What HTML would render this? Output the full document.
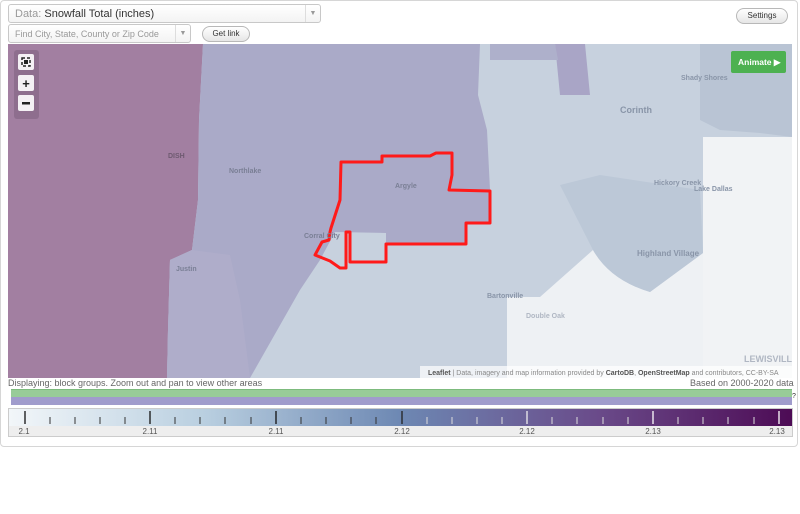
<!DOCTYPE html>
<html><head><meta charset="utf-8"><style>
body{margin:0;width:800px;height:514px;background:#fff;font-family:"Liberation Sans",Arial,sans-serif;position:relative;overflow:hidden}
.wrap{position:absolute;left:0;top:0;width:796px;height:445px;border:1px solid #d6d6d6;border-radius:4px}
.sel{position:absolute;border:1px solid #c8c8c8;border-radius:3px;background:linear-gradient(#fff,#f3f3f3);font-size:11px;color:#999;box-sizing:border-box}
.arr{position:absolute;right:0;top:0;bottom:0;width:14px;border-left:1px solid #ddd;color:#999;font-size:7px;text-align:center}
.btn{position:absolute;border:1px solid #b8b8b8;border-radius:9px;background:linear-gradient(#fff,#e6e6e6);font-size:8px;color:#333;text-align:center;box-sizing:border-box}
.abs{position:absolute}
</style></head><body>
<div class="wrap"></div>
<div class="sel" style="left:8px;top:4px;width:313px;height:19px;padding:3px 6px"><span>Data:</span> <span style="color:#333">Snowfall Total (inches)</span><div class="arr" style="line-height:17px">▼</div></div>
<div class="sel" style="left:8px;top:24px;width:183px;height:19px;padding:4px 6px;font-size:9px;color:#999">Find City, State, County or Zip Code<div class="arr" style="line-height:17px">▼</div></div>
<div class="btn" style="left:202px;top:26px;width:48px;height:16px;line-height:14px">Get link</div>
<div class="btn" style="left:736px;top:8px;width:52px;height:16px;line-height:14px">Settings</div>
<svg class="abs" style="left:8px;top:44px" width="784" height="334" viewBox="8 44 784 334">
<rect x="8" y="44" width="784" height="334" fill="#c7d1de"/>
<path d="M593,250 Q610,280 650,292 L703,253 L703,378 L507,378 L507,297 L540,297 Z" fill="#eef1f4"/>
<polygon points="703,137 792,137 792,378 703,378" fill="#f1f3f5"/>
<path d="M560,185 L600,175 L700,190 L703,253 L650,292 Q610,280 593,250 Z" fill="#bcc8d7"/>
<polygon points="700,44 792,44 792,137 760,133 720,130 700,120" fill="#b9c4d4"/>
<polygon points="8,44 203,44 199,120 198,200 192,250 170,260 168,330 167,378 8,378" fill="#a27fa1"/>
<polygon points="203,44 480,44 478,95 487,130 490,190 490,223 466,224 466,245 386,245 386,233 335,232 320,260 300,290 250,378 167,378 168,330 170,260 192,250 198,200 199,120" fill="#aaaac8"/>
<polygon points="168,330 170,260 192,250 230,255 240,300 250,378 167,378" fill="#afadca"/>
<polygon points="555,44 585,44 590,95 560,95" fill="#a9a5c6"/>
<polygon points="490,44 555,44 558,60 490,60" fill="#aeb0cb"/>
<polygon fill="none" stroke="#ff1a1a" stroke-width="3" stroke-linejoin="round" points="341,162 382,162 382,156 430,156 436,153 452,153 452,175 449,190 490,191 490,223 466,223 466,244 386,244 386,262 350,262 350,232 346,232 346,268 340,268 330,261 315,255 322,242 329,240 330,232 331,228 340,200"/>
<line x1="350" y1="232" x2="350" y2="262" stroke="#ff1a1a" stroke-width="2"/>
<g font-size="7" fill="#7a7f95" font-weight="bold">
<text x="168" y="158" fill="#6e5a70">DISH</text><text x="229" y="173">Northlake</text><text x="395" y="188">Argyle</text><text x="304" y="238">Corral City</text><text x="176" y="271">Justin</text>
<text x="620" y="113" fill="#8995a8" font-size="9">Corinth</text><text x="681" y="80" fill="#8995a8">Shady Shores</text><text x="654" y="185" fill="#8995a8">Hickory Creek</text><text x="694" y="191" fill="#8995a8">Lake Dallas</text><text x="637" y="256" fill="#8995a8" font-size="8">Highland Village</text><text x="487" y="298" fill="#8995a8">Bartonville</text><text x="526" y="318" fill="#b0b7c3">Double Oak</text><text x="744" y="362" fill="#b0b7c3" font-size="9">LEWISVILL</text>
</g>
<rect x="14" y="50" width="25" height="69" rx="3" fill="#8a6a8a" opacity="0.8"/>
<rect x="18" y="54" width="16" height="16" rx="2" fill="#f4f0f4"/><rect x="22" y="58" width="8" height="8" fill="none" stroke="#222" stroke-width="1.5" stroke-dasharray="3 2"/><rect x="24" y="60" width="4" height="4" fill="#222"/>
<rect x="18" y="75" width="16" height="16" rx="2" fill="#f4f0f4"/><text x="26" y="88" font-size="13" font-weight="bold" text-anchor="middle" fill="#222">+</text>
<rect x="18" y="95" width="16" height="16" rx="2" fill="#f4f0f4"/><rect x="22" y="102" width="8" height="2.5" fill="#222"/>
<rect x="731" y="51" width="55" height="22" rx="2" fill="#4db151"/><text x="738" y="65" font-size="8.5" fill="#fff" font-weight="bold">Animate ▶</text>
<rect x="420" y="366" width="372" height="12" fill="#fff" opacity="0.7"/>
<text x="428" y="375" font-size="7" fill="#888"><tspan fill="#555" font-weight="bold">Leaflet</tspan> | Data, imagery and map information provided by <tspan fill="#555" font-weight="bold">CartoDB</tspan>, <tspan fill="#555" font-weight="bold">OpenStreetMap</tspan> and contributors, CC-BY-SA</text>
</svg>
<div class="abs" style="left:8px;top:378px;font-size:9px;color:#666">Displaying: block groups. Zoom out and pan to view other areas</div>
<div class="abs" style="left:690px;top:378px;font-size:9px;color:#666">Based on 2000-2020 data</div>
<div class="abs" style="left:11px;top:389px;width:781px;height:8px;background:#98cc98;border-top:1px solid #7dbb7d"></div>
<div class="abs" style="left:11px;top:397px;width:781px;height:8px;background:#a09ccc"></div>
<div class="abs" style="left:792px;top:393px;font-size:7px;color:#333">?</div>
<div class="abs" style="left:8px;top:408px;width:785px;height:29px;border:1px solid #ccc;background:#eee;box-sizing:border-box"></div>
<svg class="abs" style="left:9px;top:409px" width="783" height="27">
<defs><linearGradient id="g" x1="0" x2="1"><stop offset="0" stop-color="#f2f6f9"/><stop offset="0.25" stop-color="#b9cfe0"/><stop offset="0.5" stop-color="#6d88b3"/><stop offset="0.75" stop-color="#6a4b8a"/><stop offset="1" stop-color="#4d0b55"/></linearGradient></defs>
<rect x="0" y="0" width="783" height="17" fill="url(#g)"/>
<g stroke-width="1.3">
<line x1="16" y1="2" x2="16" y2="15" stroke="#111"/><line x1="141" y1="2" x2="141" y2="15" stroke="#111"/><line x1="267" y1="2" x2="267" y2="15" stroke="#111"/><line x1="393" y1="2" x2="393" y2="15" stroke="#222"/><line x1="518" y1="2" x2="518" y2="15" stroke="#eee"/><line x1="644" y1="2" x2="644" y2="15" stroke="#fff"/><line x1="770" y1="2" x2="770" y2="15" stroke="#fff"/>
</g>
<g stroke-width="1" stroke="#333">
<path d="M41 8v7M66 8v7M91 8v7M116 8v7M166 8v7M191 8v7M216 8v7M242 8v7M292 8v7M317 8v7M342 8v7M367 8v7"/>
</g>
<g stroke-width="1" stroke="#ddd"><path d="M418 8v7M443 8v7M468 8v7M493 8v7M543 8v7M568 8v7M594 8v7M619 8v7M669 8v7M694 8v7M719 8v7M745 8v7"/></g>
<g font-size="8" fill="#555" text-anchor="middle"><text x="15" y="25">2.1</text><text x="141" y="25">2.11</text><text x="267" y="25">2.11</text><text x="393" y="25">2.12</text><text x="518" y="25">2.12</text><text x="644" y="25">2.13</text><text x="768" y="25">2.13</text></g>
</svg>
</body></html>
